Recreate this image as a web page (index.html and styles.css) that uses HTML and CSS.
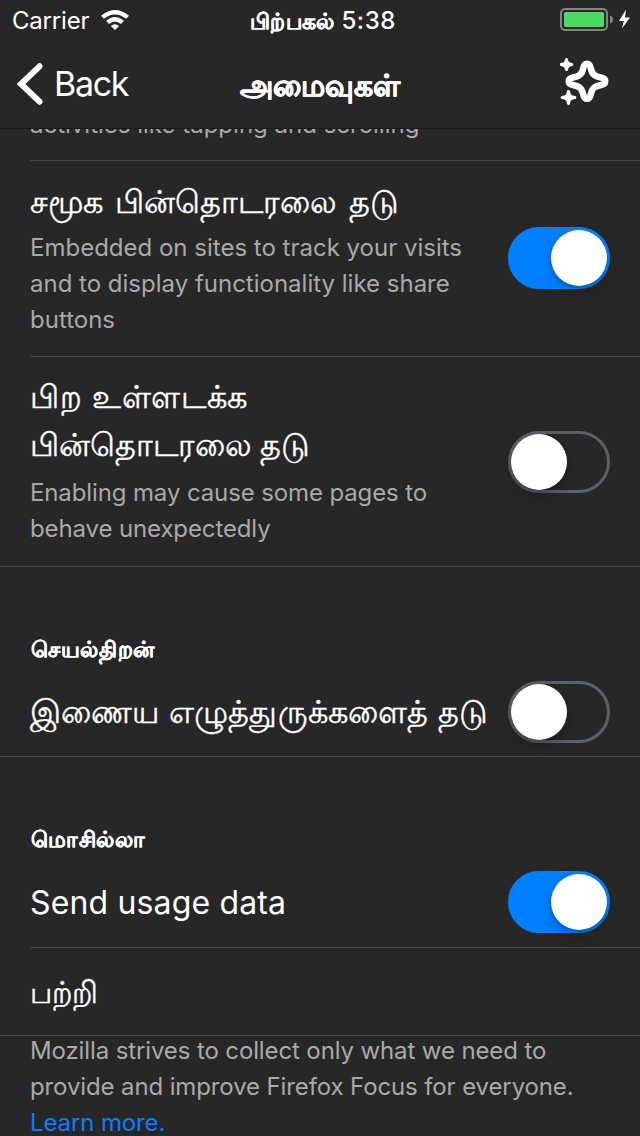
FILE: index.html
```html
<!DOCTYPE html>
<html lang="ta">
<head>
<meta charset="utf-8">
<title>அமைவுகள்</title>
<link rel="stylesheet" href="styles.css">
</head>
<body>
<header class="top">
  <div class="status">
    <div class="carrier"><span>Carrier</span>
      <svg class="wifi" width="28" height="20" viewBox="0 0 28 20" fill="#fff"><path d="M0 5.8Q14-5.8 28 5.8L25.1 8.8Q14 .2 2.9 8.8ZM5.1 11Q14 3.2 22.9 11L20 13.9Q14 8.9 8 13.9ZM9.9 15.9Q14 12.4 18.1 15.9L14 20Z"/></svg>
    </div>
    <div class="time"><span class="time-word">பிற்பகல்</span> <span class="clock">5:38</span></div>
    <div class="power">
      <svg width="71" height="24" viewBox="0 0 71 24"><rect x="1" y="1" width="46" height="21" rx="4" fill="none" stroke="#848484" stroke-width="2"/><rect x="4" y="4" width="40" height="15" rx="1.5" fill="#4cd964"/><path d="M50 7.5Q53 8.5 53 11.5T50 15.5Z" fill="#848484"/><path d="M66 1.5 59 13H63.8L62 20.5 70 9.5H65Z" fill="#fff"/></svg>
    </div>
  </div>
  <div class="nav">
    <div class="back"><svg width="26" height="42" viewBox="0 0 26 42"><path d="M22.5 3.3 4 21 22.5 38.7" fill="none" stroke="#fff" stroke-width="6" stroke-linecap="round"/></svg><span>Back</span></div>
    <h1 class="title">அமைவுகள்</h1>
    <svg class="spark" width="50" height="50" viewBox="0 0 50 50"><path d="M27 5.7C29.5 5.7 30.2 7.5 30.7 10C32 16.4 34.5 18.3 41 19.5C43.6 20 45.3 21 45.3 23.2C45.3 25.4 43.6 26.6 41 27C34.5 28.2 32 30.1 30.7 36.5C30.2 39 29.5 40.8 27 40.8C24.5 40.8 23.8 39 23.3 36.5C22 30.1 19.5 28.2 13 27C10.4 26.6 8.7 25.4 8.7 23.2C8.7 21 10.4 20 13 19.5C19.5 18.3 22 16.4 23.3 10C23.8 7.5 24.5 5.7 27 5.7Z" fill="none" stroke="#fff" stroke-width="6.4"/><path d="M6.5 1.5C7 5 8.2 6 11.8 6.5C8.2 7 7 8.2 6.5 11.5C6 8.2 4.8 7 1.2 6.5C4.8 6 6 5 6.5 1.5ZM8.5 33.5C9.1 37.5 10.5 38.9 14.8 39.5C10.5 40.1 9.1 41.5 8.5 45.5C7.9 41.5 6.5 40.1 2.2 39.5C6.5 38.9 7.9 37.5 8.5 33.5Z" fill="#fff" stroke="#fff" stroke-width="3" stroke-linejoin="round"/></svg>
  </div>
</header>
<main class="list">
  <div class="row clipped"><p class="desc">activities like tapping and scrolling</p></div>
  <section class="row social">
    <div class="copy"><h2 class="label">சமூக பின்தொடரலை தடு</h2>
    <p class="desc">Embedded on sites to track your visits<br>and to display functionality like share<br>buttons</p></div>
    <div class="switch on"><i class="knob"></i></div>
  </section>
  <section class="row double last">
    <div class="copy"><h2 class="label"><span class="wide">பிற உள்ளடக்க</span><br>பின்தொடரலை தடு</h2>
    <p class="desc tight">Enabling may cause some pages to<br>behave unexpectedly</p></div>
    <div class="switch"><i class="knob"></i></div>
  </section>
  <h3 class="group">செயல்திறன்</h3>
  <section class="row single last">
    <h2 class="label fonts">இணைய எழுத்துருக்களைத் தடு</h2>
    <div class="switch"><i class="knob"></i></div>
  </section>
  <h3 class="group">மொசில்லா</h3>
  <section class="row single usage">
    <h2 class="label latin">Send usage data</h2>
    <div class="switch on"><i class="knob"></i></div>
  </section>
  <section class="row about last"><h2 class="label">பற்றி</h2></section>
  <p class="desc footer tight">Mozilla strives to collect only what we need to<br>provide and improve Firefox Focus for everyone.<br><a class="link">Learn more.</a></p>
</main>
</body>
</html>
```
FILE: styles.css
```css
* { box-sizing: border-box; }
body { margin: 0; height: 1136px; overflow: hidden; display: flex; flex-direction: column; background: #272727; color: #fff; font-family: Inter, "Noto Sans", sans-serif; }
h1, h2, h3, p { margin: 0; font-weight: 400; }
svg { display: block; flex: none; }
.top { flex: none; height: 129px; border-bottom: 1px solid #1a1a1a; }
.status { height: 40px; display: grid; grid-template-columns: 180px 1fr 180px; grid-template-rows: 40px; align-items: center; font-size: 24px; line-height: 38px; }
.carrier { display: flex; align-items: center; gap: 12px; padding-left: 12px; letter-spacing: -.2px; }
.carrier span, .time { padding-top: 2px; }
.time { display: flex; justify-content: center; gap: 7px; padding-left: 6px; }
.time-word { font-size: 22px; font-weight: 700; letter-spacing: .3px; -webkit-text-stroke: .3px #fff; }
.clock { font-size: 24px; font-weight: 500; letter-spacing: .6px; }
.power { padding-left: 100px; }
.nav { height: 88px; display: grid; grid-template-columns: 180px 1fr 180px; grid-template-rows: 88px; align-items: center; }
.back { display: flex; align-items: center; gap: 11px; padding-left: 17px; font-size: 34px; line-height: 86px; letter-spacing: -1.3px; }
.title { text-align: center; font-size: 29.5px; font-weight: 700; line-height: 86px; padding-top: 2px; -webkit-text-stroke: .7px #fff; }
.spark { margin: -2px 0 0 100px; }
.list { flex: 1; min-height: 0; overflow: hidden; }
.row { display: flex; justify-content: space-between; align-items: center; height: 196px; margin-left: 30px; padding-right: 30px; border-bottom: 1px solid #434345; }
.row.last { margin-left: 0; padding-left: 30px; }
.row.clipped { height: 32px; align-items: flex-start; }
.clipped .desc { margin-top: -22px; }
.label { font-size: 32px; line-height: 48px; white-space: nowrap; letter-spacing: .25px; -webkit-text-stroke: .4px #fff; }
.social .label { height: 49px; line-height: 44px; word-spacing: 3px; font-size: 31.5px; letter-spacing: 0; }
.social .desc { margin-top: 1px; }
.double { height: 210px; }
.double .label { line-height: 48px; margin-top: -4px; letter-spacing: -.1px; font-size: 31.6px; }
.double .wide { letter-spacing: .7px; }
.double .desc { padding-top: 6px; }
.fonts { letter-spacing: .2px; }
.latin { -webkit-text-stroke: 0; letter-spacing: .15px; padding-top: 1px; }
.desc { color: #a9a9a9; font-size: 24px; line-height: 36px; white-space: nowrap; }
.tight { letter-spacing: -.12px; }
.group { height: 101px; padding: 62px 0 0 31px; font-size: 22px; line-height: 40px; font-weight: 700; letter-spacing: .65px; -webkit-text-stroke: .3px #fff; }
.single { height: 89px; }
.usage { height: 90px; }
.usage .switch { margin-top: -1px; }
.about { height: 88px; }
.about .label { font-size: 30px; letter-spacing: .2px; }
.footer { margin: -3px 0 0 30px; }
.link { color: #0a7cff; }
.switch { flex: none; width: 102px; height: 62px; border-radius: 31px; border: 3px solid #5b5f66; }
.social .switch { margin-top: -1px; }
.switch.on { border-color: #0080ff; background: #0080ff; }
.knob { display: block; width: 56px; height: 56px; border-radius: 50%; background: #fff; box-shadow: 0 6px 16px rgba(0,0,0,.2), 0 3px 3px rgba(0,0,0,.12); }
.on .knob { margin-left: 40px; }
```
